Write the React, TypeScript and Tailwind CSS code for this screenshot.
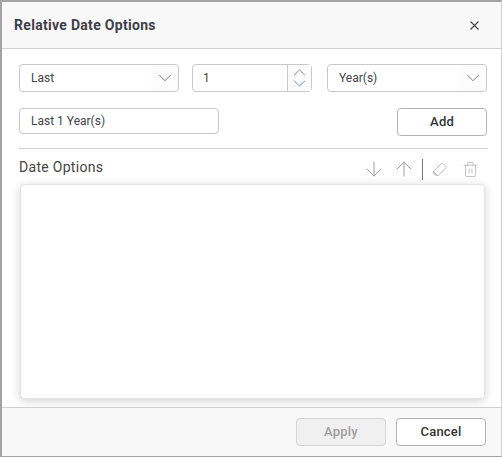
import { ChevronDown, ChevronUp, ArrowDown, ArrowUp, Trash2, X } from "lucide-react";

function SelectBox({ label, width }: { label: string; width: string }) {
  return (
    <div className={`flex h-[28px] shrink-0 items-center justify-between rounded-[4px] border border-[#c8c8c8] bg-white pl-[11px] ${width}`}>
      <span className="text-[12px] text-[#444]">{label}</span>
      <div className="flex h-full w-[27px] items-center justify-center rounded-r-[4px] bg-[#fcfcfc]">
        <ChevronDown className="h-[22px] w-[22px] text-[#6f7480]" strokeWidth={1} />
      </div>
    </div>
  );
}

function FooterButton({ label, disabled }: { label: string; disabled?: boolean }) {
  return (
    <button
      className={`h-[28px] w-[90px] rounded-[4px] border text-[13px] font-medium tracking-[0.2px] ${
        disabled ? "border-[#d6d6d6] bg-[#f0f0f0] text-[#9e9e9e]" : "border-[#b4b4b4] bg-white text-[#333]"
      }`}
    >
      {label}
    </button>
  );
}

function EraserIcon() {
  return (
    <svg viewBox="0 0 16 16" className="ml-[9px] h-[16px] w-[16px]" fill="none" stroke="#c0c0c0" strokeWidth="1">
      <path d="M1.5 10.5 L9.5 2.5 Q10.2 1.9 10.9 2.5 L14 5.6 Q14.5 6.2 14 6.8 L6 14.5 H4 L1.5 12 Z" />
      <path d="M1.5 10.5 L5.5 14.5 H4 L1.5 12 Z" fill="#d8d8d8" />
    </svg>
  );
}

export default function App() {
  return (
    <div className="h-[458px] w-[502px] bg-white font-['Roboto',sans-serif]">
      <div className="flex h-[457px] w-[502px] flex-col border-t-[2px] border-r border-b border-l-[2px] border-t-[#a3a3a3] border-r-[#d0d0d0] border-b-[#a3a3a3] border-l-[#a3a3a3]">
        <div className="flex h-[47px] shrink-0 items-center justify-between border-b border-[#d0d0d0] bg-[#f8f8f8] pl-[12px] pr-[19px]">
          <h1 className="text-[14px] font-bold tracking-[0.3px] text-[#3e3e4a]">Relative Date Options</h1>
          <X className="h-[15px] w-[15px] text-[#444]" strokeWidth={1.7} />
        </div>

        <div className="flex min-h-0 flex-1 flex-col pl-[17px] pr-[13px] pt-[15px]">
          <div className="flex items-center">
            <SelectBox label="Last" width="w-[160px]" />
            <div className="ml-[13px] flex h-[28px] w-[120px] shrink-0 items-center justify-between rounded-[4px] border border-[#c8c8c8] bg-white pl-[10px]">
              <span className="text-[12px] text-[#444]">1</span>
              <div className="flex h-full w-[24px] flex-col items-center justify-center border-l border-[#c8c8c8] bg-[#fcfcfc]">
                <ChevronUp className="-my-[5px] h-[21px] w-[21px] text-[#6f7480]" strokeWidth={1} />
                <ChevronDown className="-my-[5px] h-[21px] w-[21px] text-[#4a78b0]" strokeWidth={1} />
              </div>
            </div>
            <div className="ml-[15px]">
              <SelectBox label="Year(s)" width="w-[160px]" />
            </div>
          </div>

          <div className="mt-[16px] flex items-start justify-between pr-[1px]">
            <div className="flex h-[26px] w-[200px] items-center rounded-[4px] border border-[#c8c8c8] bg-white pl-[11px] text-[12px] text-[#444]">
              Last 1 Year(s)
            </div>
            <button className="h-[28px] w-[90px] rounded-[4px] border border-[#b4b4b4] bg-white text-[13px] font-medium tracking-[0.2px] text-[#333]">
              Add
            </button>
          </div>

          <div className="mt-[12px] border-t border-[#d0d0d0]" />

          <div className="mt-[7px] flex h-[28px] items-center justify-between pr-[9px]">
            <span className="-mt-[6px] text-[14px] tracking-[0.3px] text-[#444]">Date Options</span>
            <div className="-mt-[2px] flex items-center">
              <ArrowDown className="h-[24px] w-[24px] text-[#a0a0a0]" strokeWidth={1} />
              <ArrowUp className="ml-[6px] h-[24px] w-[24px] text-[#a0a0a0]" strokeWidth={1} />
              <div className="ml-[6px] h-[21px] w-px bg-[#777]" />
              <EraserIcon />
              <Trash2 className="ml-[14px] h-[17px] w-[17px] text-[#b0b0b0]" strokeWidth={1.1} />
            </div>
          </div>

          <div className="mr-[3px] ml-[1px] h-[215px] shrink-0 rounded-[4px] border border-[#e4e4e4] bg-white shadow-[0_2px_8px_rgba(60,40,40,0.22)]" />
        </div>

        <div className="flex h-[49px] shrink-0 items-center justify-end gap-[10px] border-t border-[#d0d0d0] bg-[#f8f8f8] pr-[15px]">
          <FooterButton label="Apply" disabled />
          <FooterButton label="Cancel" />
        </div>
      </div>
    </div>
  );
}
